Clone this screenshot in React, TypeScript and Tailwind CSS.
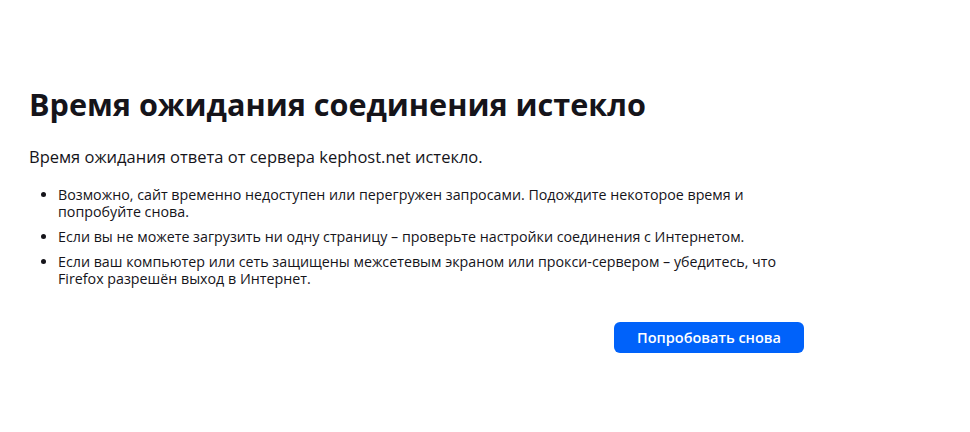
import React from "react";

export default function App() {
  return (
    <div className="w-[970px] h-[432px] bg-white text-[#15141a]" style={{ fontFamily: '"Open Sans", "Noto Sans", sans-serif' }}>
      <div className="pl-[29px] pt-[84px] w-[804px]">
        <h1 className="text-[30.6px] leading-[40px] font-bold">Время ожидания соединения истекло</h1>
        <p className="mt-[22px] text-[16.5px] leading-[22px]">Время ожидания ответа от сервера kephost.net истекло.</p>
        <ul className="mt-[18px] pl-[29px] list-disc text-[14.25px] leading-[17px] flex flex-col gap-[8px]">
          <li>Возможно, сайт временно недоступен или перегружен запросами. Подождите некоторое время и попробуйте снова.</li>
          <li>Если вы не можете загрузить ни одну страницу – проверьте настройки соединения с Интернетом.</li>
          <li>Если ваш компьютер или сеть защищены межсетевым экраном или прокси-сервером – убедитесь, что Firefox разрешён выход в Интернет.</li>
        </ul>
        <div className="mt-[35px] flex justify-end">
          <button className="h-[31px] w-[190px] rounded-[6px] bg-[#0062fa] text-white text-[14.5px] font-semibold">Попробовать снова</button>
        </div>
      </div>
    </div>
  );
}
